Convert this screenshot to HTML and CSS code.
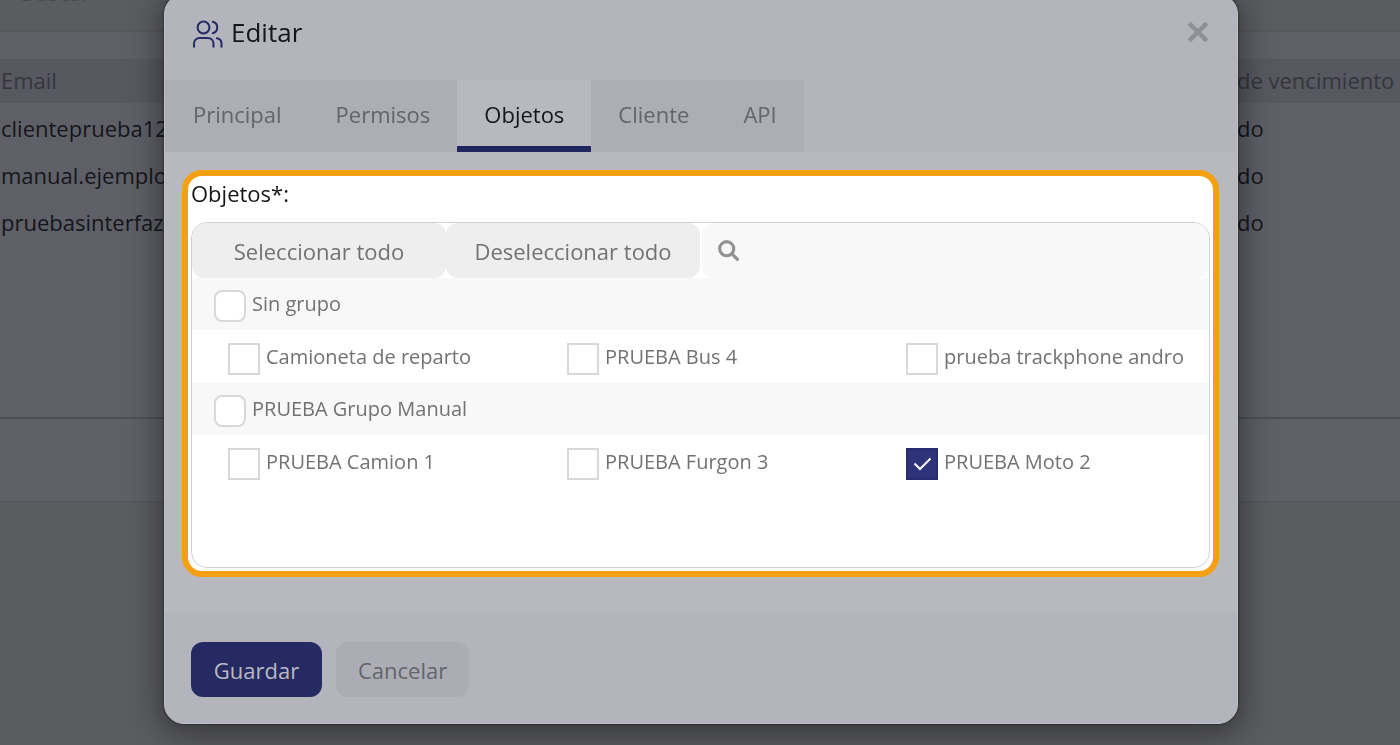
FILE: index.html
```
<!DOCTYPE html>
<html lang="es">
<head>
    <meta charset="UTF-8">
    <meta name="viewport" content="width=device-width, initial-scale=1.0">
    <title>Editar</title>
    <link rel="stylesheet" href="styles.css">
</head>
<body>
    <main class="page">
        <div class="page-toolbar">
            <input type="text" class="page-search" placeholder="Buscar" aria-label="Buscar">
        </div>
        <div class="page-panel">
            <table class="users">
                <thead>
                    <tr>
                        <th>Email</th>
                        <th class="col-expiry">de vencimiento</th>
                    </tr>
                </thead>
                <tbody>
                    <tr>
                        <td>clienteprueba12</td>
                        <td>do</td>
                    </tr>
                    <tr>
                        <td>manual.ejemplo</td>
                        <td>do</td>
                    </tr>
                    <tr>
                        <td>pruebasinterfaz@</td>
                        <td>do</td>
                    </tr>
                </tbody>
            </table>
        </div>
        <div class="page-pager"></div>
    </main>

    <div class="overlay">
        <div class="modal" role="dialog" aria-labelledby="modalTitle">
            <div class="modal-header">
                <svg class="users-icon" viewBox="0 0 30 28" aria-hidden="true">
                    <circle cx="10.500" cy="7.500" r="5.900"/>
                    <path d="M19.800 1.700a5.950 5.950 0 0 1 0 11.500"/>
                    <path d="M1 26.800v-3.300a5.500 5.500 0 0 1 5.500-5.500h8.500a5.500 5.500 0 0 1 5.500 5.500v3.300"/>
                    <path d="M23.800 18.200a5.500 5.500 0 0 1 4.700 5.300v3.300"/>
                </svg>
                <h1 id="modalTitle">Editar</h1>
                <button type="button" class="close-btn" aria-label="Cerrar">
                    <svg viewBox="0 0 20 20" aria-hidden="true"><path d="M2 2l16 16M18 2L2 18"/></svg>
                </button>
            </div>

            <nav class="tabs">
                <button type="button" class="tab">Principal</button>
                <button type="button" class="tab">Permisos</button>
                <button type="button" class="tab active">Objetos</button>
                <button type="button" class="tab">Cliente</button>
                <button type="button" class="tab">API</button>
            </nav>

            <div class="modal-body">
                <section class="highlight">
                    <h2 class="field-label">Objetos*:</h2>
                    <div class="picker">
                        <div class="picker-bar">
                            <button type="button" class="picker-btn">Seleccionar todo</button>
                            <button type="button" class="picker-btn">Deseleccionar todo</button>
                            <label class="picker-search">
                                <svg viewBox="0 0 20 20" aria-hidden="true">
                                    <circle cx="8.300" cy="8.300" r="6.700"/>
                                    <path d="M13.300 13.300l5.200 5.200"/>
                                </svg>
                                <input type="text" aria-label="Buscar objetos">
                            </label>
                        </div>

                        <div class="group">
                            <label class="check"><input type="checkbox">Sin grupo</label>
                        </div>
                        <div class="items">
                            <label class="check"><input type="checkbox">Camioneta de reparto</label>
                            <label class="check"><input type="checkbox">PRUEBA Bus 4</label>
                            <label class="check"><input type="checkbox">prueba trackphone andro</label>
                        </div>

                        <div class="group">
                            <label class="check"><input type="checkbox">PRUEBA Grupo Manual</label>
                        </div>
                        <div class="items">
                            <label class="check"><input type="checkbox">PRUEBA Camion 1</label>
                            <label class="check"><input type="checkbox">PRUEBA Furgon 3</label>
                            <label class="check">
                                <span class="tick">
                                    <input type="checkbox" checked>
                                    <svg viewBox="0 0 32 32" aria-hidden="true"><path d="M8.500 15.500l5.500 5.500L24.500 10.500"/></svg>
                                </span>PRUEBA Moto 2
                            </label>
                        </div>
                    </div>
                </section>
            </div>

            <div class="modal-footer">
                <button type="button" class="btn btn-primary">Guardar</button>
                <button type="button" class="btn">Cancelar</button>
            </div>
        </div>
    </div>
</body>
</html>
```
FILE: styles.css
```
* {
    margin: 0;
    padding: 0;
    box-sizing: border-box;
}

body {
    font-family: "Open Sans", "Noto Sans", sans-serif;
    font-size: 22px;
    line-height: 30px;
    background: #5b5c60;
    color: #15161a;
    min-height: 100vh;
    overflow: hidden;
}

button,
input {
    font: inherit;
    color: inherit;
    border: none;
    background: none;
}

button {
    cursor: pointer;
}

/* list behind the dialog */
.page-toolbar {
    height: 32px;
    border-bottom: 2px solid #57585d;
    overflow: hidden;
}

.page-search {
    display: block;
    margin-top: -22px;
    padding-left: 20px;
    height: 28px;
}

.page-search::placeholder {
    color: #494a50;
    opacity: 1;
}

.page-panel {
    background: #5e5f67;
    min-height: 387px;
    padding-top: 27px;
    border-bottom: 2px solid #4e4f55;
}

.users {
    width: 100%;
    border-collapse: collapse;
    table-layout: fixed;
}

.users th {
    height: 44px;
    padding-bottom: 2px;
    background: #575860;
    color: #35363b;
    font-weight: 400;
    text-align: left;
}

.users td {
    height: 47px;
    padding-top: 2px;
}

.users th:first-child,
.users td:first-child {
    padding-left: 1px;
}

.users .col-expiry {
    width: 163px;
}

.page-pager {
    height: 84px;
    background: #5e5f67;
    border-bottom: 2px solid #58595e;
}

/* dialog */
.overlay {
    position: fixed;
    inset: 0;
    padding: 0 162px 0 164px;
}

.modal {
    margin-top: -6px;
    background: #b3b4bc;
    border: 1px solid #c0c1c6;
    border-radius: 20px;
    box-shadow: 0 6px 32px 4px rgba(0, 0, 0, 0.4), 0 0 3px rgba(0, 0, 0, 0.6);
    overflow: hidden;
}

.modal-header {
    display: flex;
    align-items: center;
    gap: 8px;
    height: 85px;
    padding: 0 28px 12px;
}

.modal-header h1 {
    font-size: 26px;
    font-weight: 400;
    line-height: 36px;
}

.users-icon {
    width: 30px;
    height: 28px;
    margin-top: 5px;
    fill: none;
    stroke: #252a66;
    stroke-width: 2;
    stroke-linecap: round;
}

.close-btn {
    margin-left: auto;
    width: 22px;
    height: 22px;
}

.close-btn svg {
    display: block;
    width: 22px;
    height: 22px;
    stroke: #8e9095;
    stroke-width: 4;
}

.tabs {
    display: flex;
    height: 72px;
}

.tab {
    padding: 0 27px;
    background: #acadb5;
    color: #63656b;
    border-bottom: 6px solid transparent;
    border-top: 2px solid transparent;
}

.tab:first-child {
    padding-left: 28px;
}

.tab.active {
    background: #b8b9be;
    color: #15161a;
    border-top-color: #b8b9be;
    border-bottom-color: #202660;
}

.modal-body {
    background: #b8b9be;
    padding: 18px 18px 36px 17px;
}

.highlight {
    border: 6px solid #f4a012;
    border-radius: 20px;
    background: #fff;
    padding: 2px 3px 3px;
}

.field-label {
    font-size: 22px;
    font-weight: 400;
    line-height: 30px;
    margin-bottom: 14px;
}

.picker {
    min-height: 346px;
    border: 1px solid #cfd0d1;
    border-radius: 16px;
    overflow: hidden;
    color: #727272;
}

.picker-bar {
    display: flex;
    height: 55px;
}

.picker-btn {
    flex: none;
    padding: 0 28px;
    min-width: 254px;
    background: #eee;
    border-radius: 12px;
}

.picker-search {
    flex: 1;
    display: flex;
    align-items: center;
    gap: 12px;
    margin-left: 2px;
    padding: 0 16px;
    background: #f8f8f8;
    border-radius: 12px;
}

.picker-search svg {
    width: 21px;
    height: 21px;
    fill: none;
    stroke: #929292;
    stroke-width: 3;
    stroke-linecap: round;
}

.picker-search input {
    flex: 1;
    min-width: 0;
    outline: none;
}

.group {
    background: #f8f8f8;
    padding-left: 22px;
}

.items {
    display: grid;
    grid-template-columns: repeat(3, 1fr);
}

.items .check {
    height: 53px;
    padding-left: 36px;
}

.check {
    display: flex;
    align-items: center;
    gap: 6px;
    height: 52px;
    font-size: 20px;
    white-space: nowrap;
}

.check input {
    appearance: none;
    flex: none;
    width: 32px;
    height: 32px;
    margin-top: 4px;
    background: #fff;
    border: 2px solid #d8d8d8;
}

.group input {
    border-radius: 8px;
}

.check input:checked {
    background: #2d3279;
    border-color: #282d70;
}

.tick {
    position: relative;
    display: flex;
}

.tick svg {
    position: absolute;
    left: 0;
    bottom: 0;
    width: 32px;
    height: 32px;
    fill: none;
    stroke: #fff;
    stroke-width: 2;
    pointer-events: none;
}

.modal-footer {
    display: flex;
    gap: 14px;
    padding: 29px 26px 26px;
}

.btn {
    height: 55px;
    min-width: 131px;
    padding: 0 22px;
    border-radius: 12px;
    background: #acadb4;
    color: #63656b;
}

.btn-primary {
    background: #252a62;
    color: #b8b9c4;
}
```
